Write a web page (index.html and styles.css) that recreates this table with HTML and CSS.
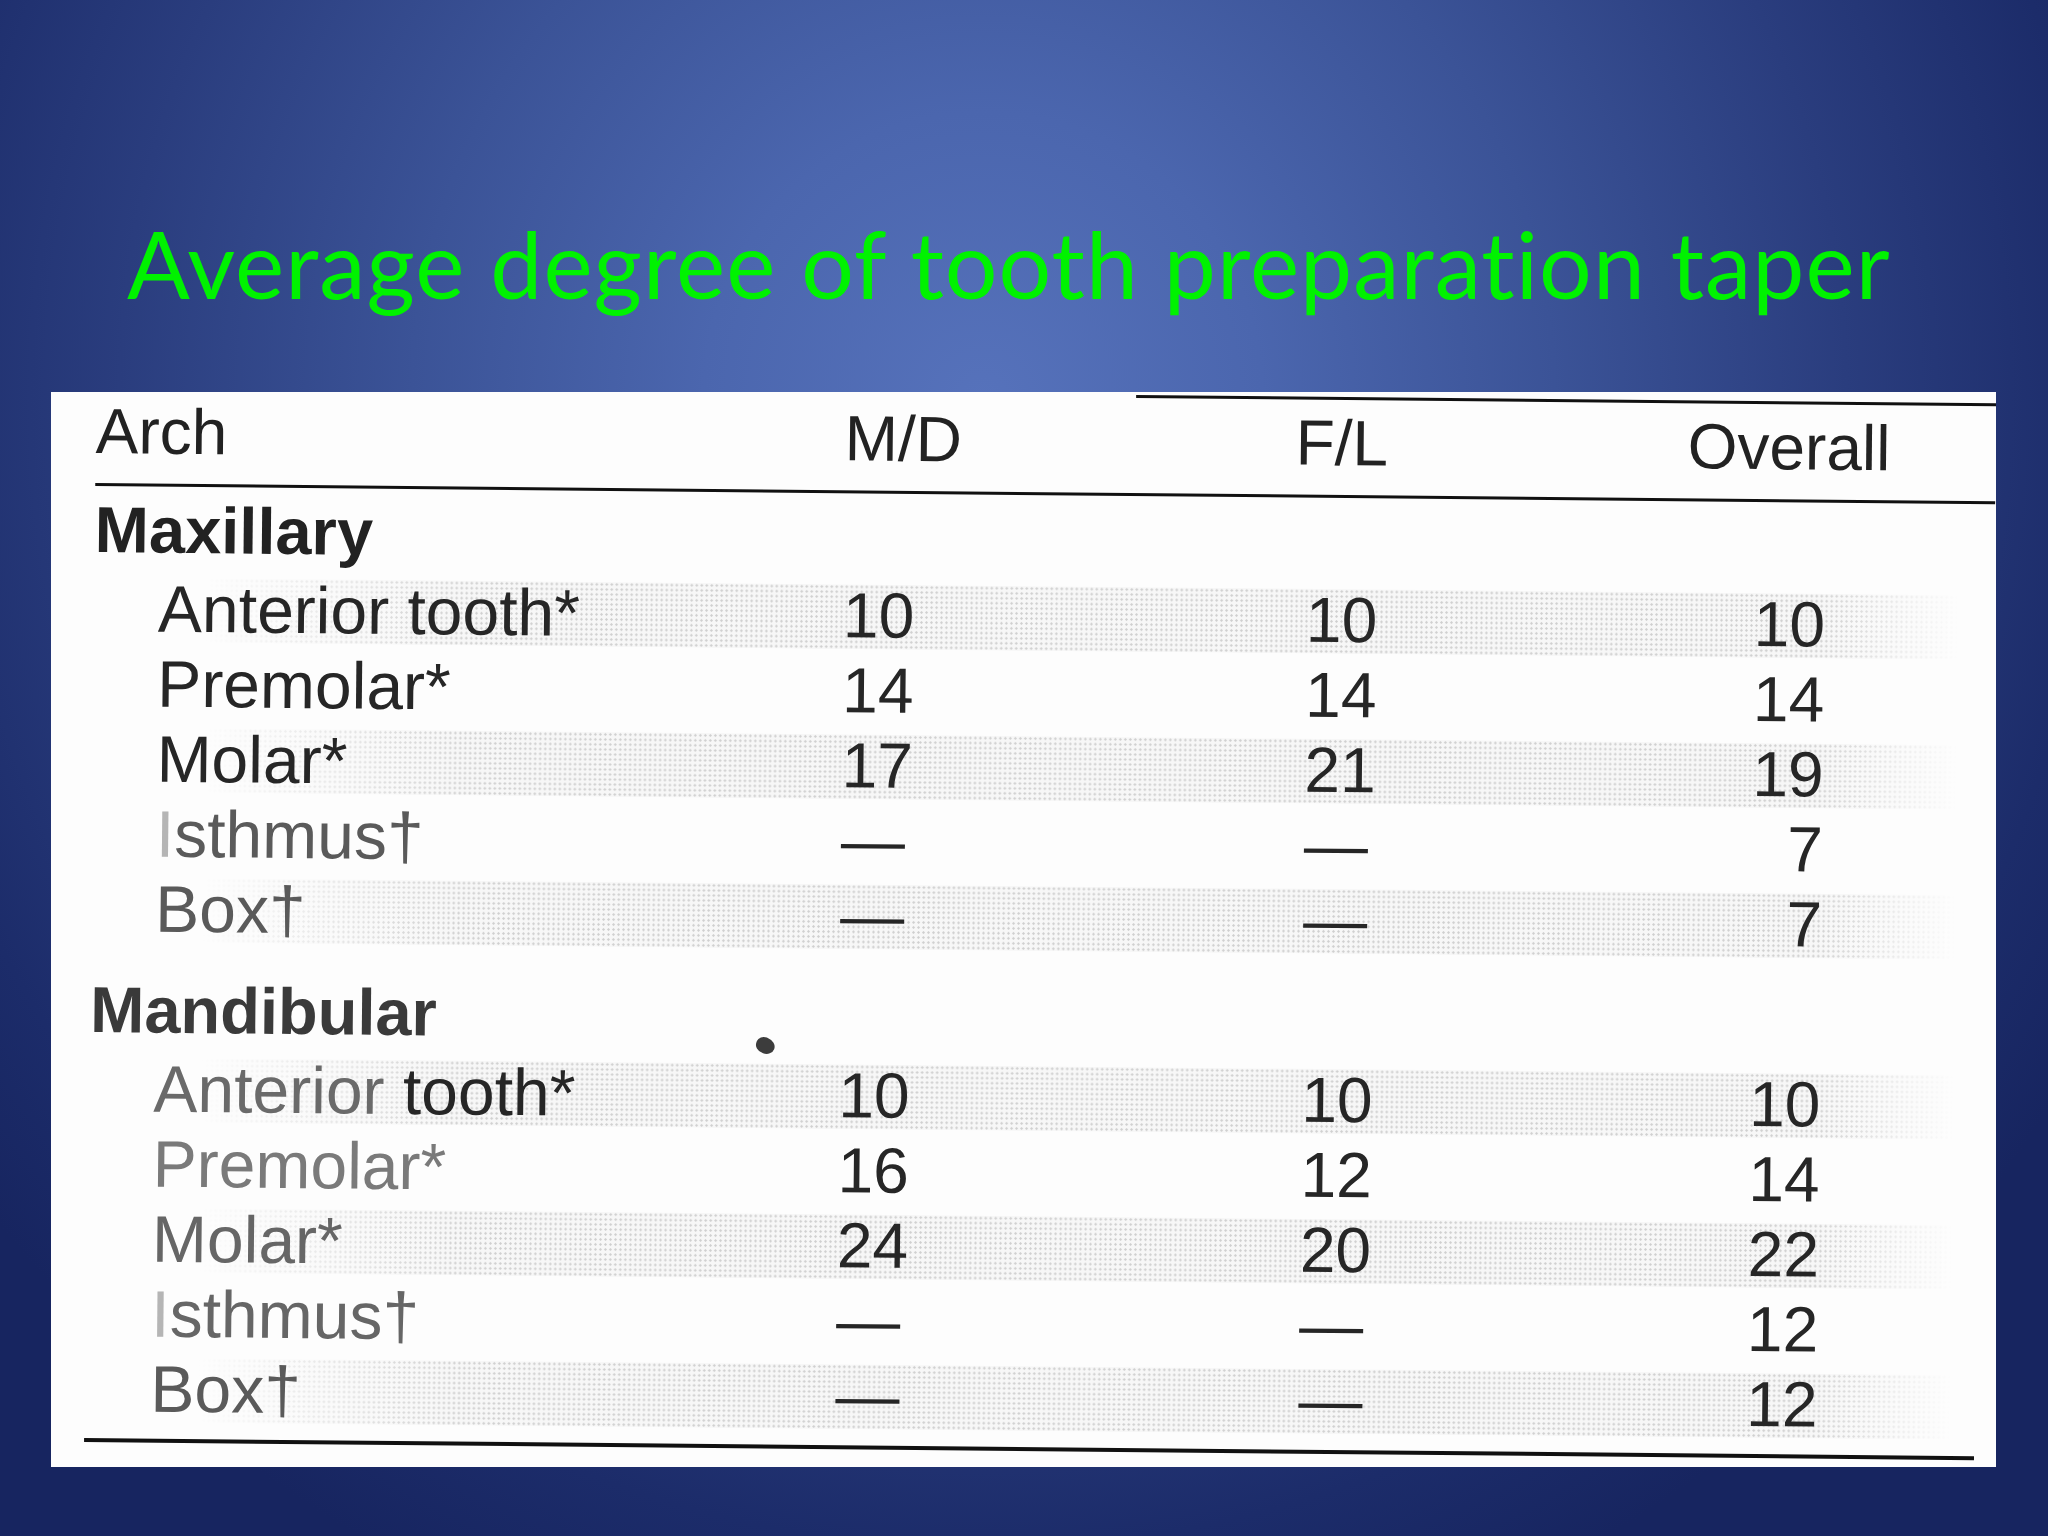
FILE: index.html
```html
<!DOCTYPE html>
<html lang="en">
<head>
<meta charset="utf-8">
<title>Average degree of tooth preparation taper</title>
<link rel="stylesheet" href="styles.css">
</head>
<body>
<div class="slide">
  <h1 class="title">Average degree of tooth preparation taper</h1>
  <div class="sheet">
    <div class="table">
      <div class="top-rule"></div>
      <div class="row head">
        <span class="c-label">Arch</span><span class="c-md">M/D</span><span class="c-fl">F/L</span><span class="c-ov">Overall</span>
      </div>
      <div class="rule mid"></div>

      <div class="row group g1"><span class="c-label">Maxillary</span></div>
      <div class="row item dots first"><span class="c-label">Anterior tooth*</span><span class="c-md">10</span><span class="c-fl">10</span><span class="c-ov">10</span></div>
      <div class="row item"><span class="c-label">Premolar*</span><span class="c-md">14</span><span class="c-fl">14</span><span class="c-ov">14</span></div>
      <div class="row item dots"><span class="c-label">Molar*</span><span class="c-md">17</span><span class="c-fl">21</span><span class="c-ov">19</span></div>
      <div class="row item faint"><span class="c-label"><span class="ghost">I</span>sthmus†</span><span class="c-md">—</span><span class="c-fl">—</span><span class="c-ov">7</span></div>
      <div class="row item dots faint"><span class="c-label">Box†</span><span class="c-md">—</span><span class="c-fl">—</span><span class="c-ov">7</span></div>

      <div class="row group g2"><span class="c-label">Mandibular</span></div>
      <div class="row item dots first"><span class="c-label"><span class="grey">Anterior</span> tooth*</span><span class="c-md">10</span><span class="c-fl">10</span><span class="c-ov">10</span></div>
      <div class="row item pale"><span class="c-label">Premolar*</span><span class="c-md">16</span><span class="c-fl">12</span><span class="c-ov">14</span></div>
      <div class="row item dots pale2"><span class="c-label">Molar*</span><span class="c-md">24</span><span class="c-fl">20</span><span class="c-ov">22</span></div>
      <div class="row item pale2"><span class="c-label"><span class="ghost">I</span>sthmus†</span><span class="c-md">—</span><span class="c-fl">—</span><span class="c-ov">12</span></div>
      <div class="row item dots faint"><span class="c-label">Box†</span><span class="c-md">—</span><span class="c-fl">—</span><span class="c-ov">12</span></div>

      <div class="rule bottom"></div>
      <span class="speck"></span>
    </div>
  </div>
</div>
</body>
</html>
```
FILE: styles.css
```css
html, body {
  margin: 0;
  padding: 0;
}

body {
  width: 2048px;
  height: 1536px;
  overflow: hidden;
}

.slide {
  width: 2048px;
  height: 1536px;
  box-sizing: border-box;
  padding-top: 217px;
  background:
    radial-gradient(ellipse 62% 85% at 48% 26%, #5672bb 0%, #4b66ae 22%, #3b5397 45%, #2a3d7e 68%, #1c2c6a 88%, #172560 100%);
}

.title {
  margin: 0 0 83px 127px;
  height: 92px;
  font-family: "Lato", "Open Sans", sans-serif;
  font-weight: 400;
  font-size: 93px;
  line-height: 92px;
  color: #00f200;
  white-space: nowrap;
  letter-spacing: 1.05px;
}

.sheet {
  margin-left: 51px;
  width: 1945px;
  height: 1075px;
  background: #fdfdfd;
  overflow: hidden;
}

.table {
  position: relative;
  height: 100%;
  transform: rotate(0.55deg);
  transform-origin: 50% 50%;
  font-family: "Liberation Sans", Arial, sans-serif;
  color: #262626;
  isolation: isolate;
}

.top-rule {
  margin: 2px 0 0 1080px;
  width: 860px;
  height: 3px;
  background: #111;
}

.row {
  position: relative;
  display: grid;
  grid-template-columns: 749px 463px 380px 210px;
  padding-left: 40px;
  height: 75px;
  line-height: 75px;
  font-size: 64px;
  white-space: nowrap;
}

.row.head {
  margin-top: 3px;
  height: 80px;
  line-height: 80px;
  color: #222;
}

.row.head .c-fl {
  margin-left: -12px;
}

.row.head .c-ov {
  text-align: left;
}

.rule {
  background: #111;
  height: 3px;
}

.rule.mid {
  margin: 11.5px 0 0 40px;
  width: 1900px;
}

.rule.bottom {
  margin: 12.9px 0 0 38px;
  width: 1890px;
  height: 4px;
}

.row.group {
  font-weight: 700;
  font-size: 65px;
}

.row.g1 {
  margin-top: 6.8px;
  color: #222;
}

.row.g2 {
  margin-top: 26.7px;
  color: #3a3a3a;
}

.row.item.first {
  margin-top: 3.3px;
}

.row.item .c-label {
  padding-left: 64px;
  font-size: 66px;
}

.c-ov {
  text-align: right;
  padding-right: 71px;
}

.row.faint .c-label {
  color: #5a5a5a;
}

.row.pale .c-label {
  color: #7a7a7a;
}

.row.pale2 .c-label {
  color: #666;
}

.ghost {
  color: #b5b5b5;
}

.grey {
  color: #6a6a6a;
}

.row.dots::before {
  content: "";
  position: absolute;
  left: 150px;
  right: 40px;
  top: 6px;
  bottom: 4px;
  z-index: -1;
  background-color: rgba(0, 0, 0, 0.025);
  background-image: radial-gradient(circle, rgba(0, 0, 0, 0.16) 0.9px, transparent 1.5px);
  background-size: 5px 5px;
  -webkit-mask-image: linear-gradient(to right, transparent 0, #000 260px, #000 92%, transparent 100%);
  mask-image: linear-gradient(to right, transparent 0, #000 260px, #000 92%, transparent 100%);
}

.speck {
  position: absolute;
  left: 706px;
  top: 646px;
  width: 19px;
  height: 16px;
  border-radius: 45% 55% 50% 50%;
  background: #3c3c3c;
  transform: rotate(20deg);
}
```
